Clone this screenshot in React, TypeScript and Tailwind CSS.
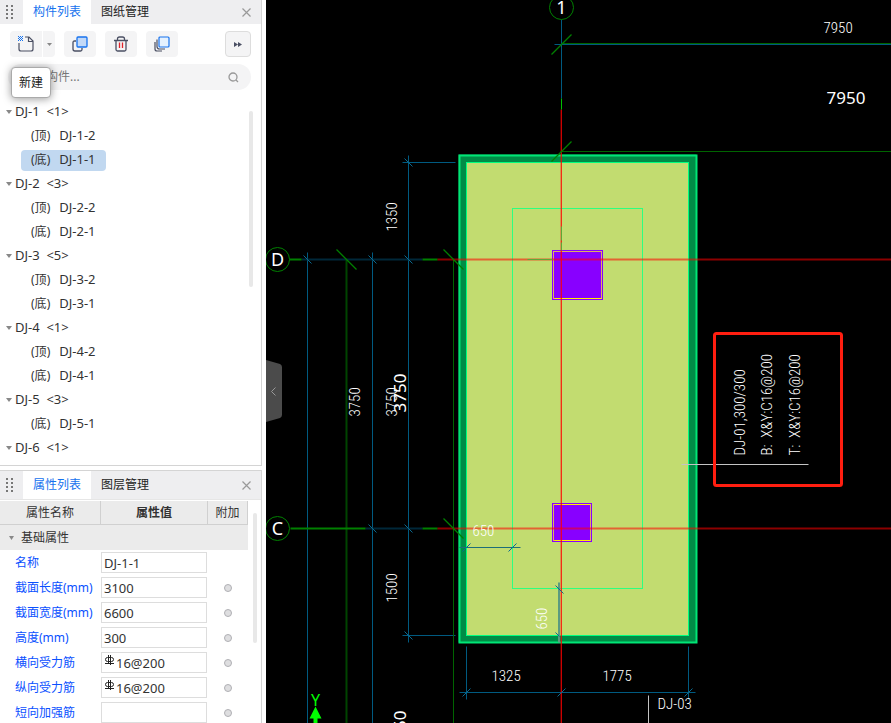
import { useState } from "react";
import clsx from "clsx";

const GROUPS = [
  { name: "DJ-1", count: 1, items: [["顶", "DJ-1-2"], ["底", "DJ-1-1"]] },
  { name: "DJ-2", count: 3, items: [["顶", "DJ-2-2"], ["底", "DJ-2-1"]] },
  { name: "DJ-3", count: 5, items: [["顶", "DJ-3-2"], ["底", "DJ-3-1"]] },
  { name: "DJ-4", count: 1, items: [["顶", "DJ-4-2"], ["底", "DJ-4-1"]] },
  { name: "DJ-5", count: 3, items: [["底", "DJ-5-1"]] },
  { name: "DJ-6", count: 1, items: [] },
];

const PROPERTIES = [
  { id: "name", label: "名称", value: "DJ-1-1" },
  { id: "length", label: "截面长度(mm)", value: "3100", extra: true },
  { id: "width", label: "截面宽度(mm)", value: "6600", extra: true },
  { id: "height", label: "高度(mm)", value: "300", extra: true },
  { id: "bar-x", label: "横向受力筋", value: "16@200", extra: true, rebar: true },
  { id: "bar-y", label: "纵向受力筋", value: "16@200", extra: true, rebar: true },
  { id: "bar-short", label: "短向加强筋", value: "", extra: true },
];

export default function App() {
  return (
    <div className="flex h-screen overflow-hidden bg-white font-['Noto_Sans','Noto_Sans_CJK_SC',sans-serif] text-xs text-[#333]">
      <aside className="mr-1 flex w-[262px] shrink-0 flex-col gap-1">
        <ComponentPanel />
        <PropertyPanel />
      </aside>
      <main className="relative min-w-0 flex-1 bg-black">
        <Drawing />
        <button type="button" aria-label="收起" className="absolute top-[360px] left-0">
          <svg width="16" height="62" viewBox="0 0 16 62" fill="none">
            <path d="M0 0L14 4Q16 5 16 7V55Q16 57 14 58L0 62Z" fill="#4b4b4b" />
            <path d="M9.500 27.500L5.500 31.500L9.500 35.500" stroke="#999" />
          </svg>
        </button>
      </main>
    </div>
  );
}

function PanelTabs({ tabs, className }: { tabs: string[]; className: string }) {
  const [active, setActive] = useState(0);

  return (
    <div className={clsx("flex shrink-0 items-stretch bg-[#eeeef0]", className)}>
      <div className="flex w-[23px] items-center pl-1.5">
        <svg width="7" height="14" fill="#777">
          {[0, 4, 8, 12].map((y) => (
            <g key={y}>
              <rect y={y} width="2" height="2" />
              <rect x="5" y={y} width="2" height="2" />
            </g>
          ))}
        </svg>
      </div>
      {tabs.map((tab, i) => (
        <button
          key={tab}
          type="button"
          onClick={() => setActive(i)}
          className={clsx("px-2.5 leading-5", i === active ? "bg-white text-[#1672ee]" : "text-[#222]")}
        >
          {tab}
        </button>
      ))}
      <button type="button" aria-label="关闭" className="mr-2.5 ml-auto">
        <svg width="9" height="9" stroke="#999" strokeWidth="1.200">
          <path d="M.5 .5L8.500 8.500M8.500 .5L.5 8.500" />
        </svg>
      </button>
    </div>
  );
}

function ComponentPanel() {
  const [selected, setSelected] = useState("DJ-1-1");

  return (
    <section className="flex min-h-0 flex-1 flex-col border-r border-b border-[#d4d4d4]">
      <PanelTabs tabs={["构件列表", "图纸管理"]} className="h-6" />

      <div className="mt-[7px] flex h-[26px] shrink-0 gap-[9px] px-2.5">
        <div className="relative flex gap-px">
          <button type="button" aria-label="新建" className="grid w-8 place-items-center rounded-l-sm bg-[#f4f4f5]">
            <NewIcon />
          </button>
          <button type="button" aria-label="更多新建" className="grid w-3 place-items-center rounded-r-sm bg-[#f4f4f5]">
            <svg width="5" height="3" fill="#888">
              <path d="M0 0H5L2.500 3Z" />
            </svg>
          </button>
          <div
            role="tooltip"
            className="absolute top-9 left-px z-10 flex h-[31px] w-10 items-center justify-center rounded-sm border border-[#aaa] bg-white text-[#222] shadow-[0_1px_9px_rgba(0,0,0,0.4)]"
          >
            新建
          </div>
        </div>
        <button type="button" aria-label="复制" className="grid w-8 place-items-center rounded-sm bg-[#f4f4f5]">
          <CopyIcon />
        </button>
        <button type="button" aria-label="删除" className="grid w-8 place-items-center rounded-sm bg-[#f4f4f5]">
          <TrashIcon />
        </button>
        <button type="button" aria-label="层间复制" className="grid w-8 place-items-center rounded-sm bg-[#f4f4f5]">
          <LayersIcon />
        </button>
        <button
          type="button"
          aria-label="展开"
          className="ml-auto grid w-[26px] place-items-center rounded-sm border border-[#ddd] bg-[#f4f4f5]"
        >
          <svg width="8" height="5" fill="#4a4f63">
            <path d="M0 0L4 2.500L0 5ZM4 0L8 2.500L4 5Z" />
          </svg>
        </button>
      </div>

      <label className="mr-2.5 ml-2 mt-[7px] flex h-[26px] shrink-0 items-center rounded-full bg-[#f4f4f5] pr-3 pl-[14px]">
        <input
          type="text"
          aria-label="搜索构件"
          placeholder="搜索构件..."
          className="min-w-0 flex-1 bg-transparent outline-none placeholder:text-[#777]"
        />
        <svg width="11" height="11" fill="none" stroke="#999" strokeWidth="1.300">
          <circle cx="5" cy="5" r="4" />
          <path d="M8 8L10 10" />
        </svg>
      </label>

      <div className="mt-2.5 flex min-h-0 flex-1 overflow-hidden pr-2">
        <ul className="flex-1">
          {GROUPS.map((group) => (
            <li key={group.name}>
              <div className="flex h-6 items-center gap-[3px] pl-1.5">
                <svg width="6" height="4" fill="#888">
                  <path d="M0 0H6L3 4Z" />
                </svg>
                <span className="text-[13px] whitespace-pre">{`${group.name}  <${group.count}>`}</span>
              </div>
              <ul>
                {group.items.map(([layer, name]) => (
                  <li key={name} className="flex h-6 items-center pl-[21px]">
                    <button
                      type="button"
                      onClick={() => setSelected(name)}
                      className={clsx("flex h-[21px] items-center gap-[9px] rounded-sm px-2.5", name === selected && "bg-[#c1d8f0]")}
                    >
                      <span>({layer})</span>
                      <span className="text-[13px]">{name}</span>
                    </button>
                  </li>
                ))}
              </ul>
            </li>
          ))}
        </ul>
        <div className="mt-[11px] h-44 w-1 rounded-full bg-[#e8e8e8]" />
      </div>
    </section>
  );
}

function PropertyPanel() {
  return (
    <section className="flex h-[253px] shrink-0 flex-col border-t border-r border-[#d4d4d4]">
      <PanelTabs tabs={["属性列表", "图层管理"]} className="h-[29px] border-b border-[#e6e6e6]" />
      <div className="mt-px flex min-h-0 flex-1 items-start overflow-hidden">
        <table className="w-[248px] table-fixed border-separate border-spacing-0">
          <colgroup>
            <col className="w-[101px]" />
            <col className="w-[107px]" />
            <col className="w-[40px]" />
          </colgroup>
          <thead>
            <tr className="h-6 bg-[#ebebeb]">
              <th className="border-r border-b border-[#d0d0d0] font-normal">属性名称</th>
              <th className="border-r border-b border-[#d0d0d0] font-bold">属性值</th>
              <th className="border-r border-b border-[#d0d0d0] font-normal">附加</th>
            </tr>
          </thead>
          <tbody>
            <tr className="h-[25px] bg-[#ebebeb]">
              <th colSpan={3} className="pl-[9px] text-left font-normal">
                <span className="flex items-center gap-[7px]">
                  <svg width="5" height="4" fill="#888">
                    <path d="M0 0H5L2.500 4Z" />
                  </svg>
                  基础属性
                </span>
              </th>
            </tr>
            {PROPERTIES.map((prop) => (
              <tr key={prop.id} className="h-[25px]">
                <td className="pl-[15px] whitespace-nowrap text-[#0a50ff]">
                  <label htmlFor={prop.id}>{prop.label}</label>
                </td>
                <td>
                  <div className="flex h-[21px] w-[106px] items-center gap-px border border-[#ddd] pl-0.5">
                    {prop.rebar && <RebarIcon />}
                    <input
                      id={prop.id}
                      defaultValue={prop.value}
                      className="w-full min-w-0 bg-transparent text-[13px] leading-4 outline-none"
                    />
                  </div>
                </td>
                <td>
                  {prop.extra && (
                    <input
                      type="checkbox"
                      aria-label={`附加${prop.label}`}
                      className="mx-auto block size-2 appearance-none rounded-full border border-[#b0b0b4] bg-[#dedee0] checked:bg-[#1672ee]"
                    />
                  )}
                </td>
              </tr>
            ))}
          </tbody>
        </table>
        <div className="mt-3 ml-[5px] h-[130px] w-1 rounded-full bg-[#e8e8e8]" />
      </div>
    </section>
  );
}

function NewIcon() {
  return (
    <svg width="16" height="16" viewBox="0 0 16 16" fill="none" stroke="#4a4f63" strokeWidth="1.200">
      <path d="M1 7V13Q1 15 3 15H13Q15 15 15 13V5L11 1H7" />
      <path d="M10.500 1V5.500H15" />
      <path d="M0 .5H5M0 2.500H5M0 4.500H5" stroke="#1672ee" strokeWidth="1" strokeDasharray="1 1" />
      <path d="M1 1.500H5M1 3.500H5" stroke="#1672ee" strokeWidth="1" strokeDasharray="1 1" />
    </svg>
  );
}

function CopyIcon() {
  return (
    <svg width="16" height="16" viewBox="0 0 16 16" fill="none" strokeWidth="1.300">
      <path d="M4 5H2.500Q1 5 1 6.500V13Q1 15 3 15H8.500Q10 15 10 13.500V12" stroke="#4a4f63" />
      <rect x="5" y="1" width="10" height="10" rx="1" fill="#c3d9f7" stroke="#1672ee" />
    </svg>
  );
}

function TrashIcon() {
  return (
    <svg width="14" height="16" viewBox="0 0 14 16" fill="none" stroke="#4a4f63" strokeWidth="1.300">
      <path d="M0 4.500H14M3.500 4V3Q3.500 1 5.500 1H8.500Q10.500 1 10.500 3V4M2 5V13.500Q2 15 3.500 15H10.500Q12 15 12 13.500V5" />
      <path d="M5.500 6.500V12M8.500 6.500V12" stroke="#e0242b" />
    </svg>
  );
}

function LayersIcon() {
  return (
    <svg width="16" height="16" viewBox="0 0 16 16" fill="none" strokeWidth="1.200">
      <path d="M3 3.500V10.500Q3 13 5.500 13H11" stroke="#4a4f63" />
      <path d="M1 6V13Q1 15 3 15H8" stroke="#4a4f63" />
      <rect x="5" y="1" width="10" height="10" rx="1" fill="#e5f1fe" stroke="#1672ee" />
    </svg>
  );
}

function RebarIcon() {
  return (
    <svg width="10" height="11" viewBox="0 0 10 11" fill="none" stroke="#222" className="mb-1 ml-px shrink-0">
      <rect x=".5" y="2.500" width="8" height="4" rx="2" />
      <path d="M3.500 0V8M5.500 0V10M0 8.500H9" />
    </svg>
  );
}

// short slashes where dimension lines meet; d is 1 for "\" and -1 for "/"
const TICKS = [
  [307, 259, 1], [372, 259, 1], [408, 259, 1], [408, 162, 1],
  [372, 528, 1], [408, 528, 1], [408, 635, 1], [559, 589, 1],
  [466, 547, -1], [512, 547, -1], [466, 692, -1], [561, 692, -1], [688, 692, -1],
];

const AXIS_TICKS = [
  [561, 44, -1], [561, 151, -1], [346, 259, 1], [453, 259, 1], [453, 528, 1],
];

const VERTICAL_DIMS = [
  { x: 396, y: 231, text: "1350" },
  { x: 359, y: 416, text: "3750" },
  { x: 396, y: 416, text: "3750" },
  { x: 396, y: 602, text: "1500" },
  { x: 546, y: 629, text: "650" },
  { x: 744, y: 455, text: "DJ-01,300/300" },
  { x: 771, y: 455, text: "B:  X&Y:C16@200" },
  { x: 799, y: 455, text: "T:  X&Y:C16@200" },
];

const FAR = 4000;

function Drawing() {
  return (
    <svg className="absolute inset-0 size-full" fill="none">
      {/* model coordinates, on pixel centres so that hairlines stay sharp */}
      <g transform="translate(-265.500 .5)">
        <g stroke="#005a80">
          <path d={`M561 19V98M554 44H${FAR}M402 162H455M402 635H455M408 155V642`} />
          <path d={`M307 252V${FAR}M372 252V${FAR}M459 692H695M466 646V699M688 646V699`} />
        </g>
        <path d="M301 259H422M365 528H422" stroke="#00283a" strokeWidth="2" />
        <path d={`M346 259V${FAR}`} stroke="#004400" strokeWidth="2" />
        <path d={`M453 259V${FAR}M561 151H${FAR}M561 43H${FAR}`} stroke="#006400" />
        <path d="M266 259H301M290 528H365M422 259H437M422 528H437" stroke="#008000" strokeWidth="2" />

        <rect x="458" y="154" width="238" height="488" fill="#008c46" />
        <rect x="459" y="155" width="237" height="487" stroke="#00e676" strokeWidth="2" />
        <rect x="466" y="162" width="222" height="473" fill="#c2dc70" stroke="#00ff7f" />
        <rect x="512" y="208" width="130" height="380" stroke="#2dff80" />

        <path d="M459 547H520" stroke="#1e6e78" />
        <path d="M558.500 582V642" stroke="#5a9a80" strokeWidth="2" />

        <rect x="552" y="250" width="50" height="49" fill="#8800ff" stroke="#8800ff" />
        <rect x="553" y="251" width="48" height="47" stroke="#dcb060" />
        <rect x="552" y="503" width="39" height="38" fill="#8800ff" stroke="#8800ff" />
        <rect x="553" y="504" width="37" height="36" stroke="#dcb060" />
        <path d="M554 298H601M554 504H590M554 540H590" stroke="#fff000" />

        <path d={`M437 259H${FAR}M437 528H${FAR}`} stroke="#ff0000" strokeOpacity=".55" strokeWidth="2" />
        <path d={`M560 109V${FAR}`} stroke="#ff0000" strokeOpacity=".3" />
        <path d={`M561 109V${FAR}`} stroke="#ff0000" strokeOpacity=".8" />
        <path d="M527 259H552M561 226V240M561 242V250" stroke="#5ca838" />
        <path d="M561 98V109" stroke="#00c000" />

        <g stroke="#0a6a90">
          {TICKS.map(([x, y, d]) => (
            <path key={`${x}-${y}`} d={`M${x - 4} ${y - 4 * d}L${x + 4} ${y + 4 * d}`} />
          ))}
          <path d="M555 632L559 636" />
        </g>
        <g stroke="#008000" strokeWidth="1.300">
          {AXIS_TICKS.map(([x, y, d]) => (
            <path key={`${x}-${y}`} d={`M${x - 10} ${y - 10 * d}L${x + 10} ${y + 10 * d}`} />
          ))}
        </g>

        <g stroke="#008000" fill="#000">
          <circle cx="561" cy="7" r="12" />
          <circle cx="277" cy="259" r="12" />
          <circle cx="277" cy="528" r="12" />
        </g>
        <g fill="#fff" className="text-lg" textAnchor="middle">
          <text x="561" y="13">1</text>
          <text x="277" y="265">D</text>
          <text x="277" y="534">C</text>
        </g>

        <path d="M681 464H808M648 695V723" stroke="#c4c4c4" />
        <rect x="714" y="333" width="127" height="152" rx="2" stroke="#ff1e10" strokeWidth="3" />

        <g fill="#fff" className="font-['Roboto_Condensed','DejaVu_Sans_Condensed',sans-serif] text-[15px] font-light">
          <text x="823" y="32">7950</text>
          <text x="491" y="680">1325</text>
          <text x="602" y="680">1775</text>
          <text x="472" y="535">650</text>
          <text x="657" y="708">DJ-03</text>
          {VERTICAL_DIMS.map((dim) => (
            <text key={`${dim.x}-${dim.y}`} transform={`translate(${dim.x} ${dim.y}) rotate(-90)`} className="whitespace-pre">
              {dim.text}
            </text>
          ))}
        </g>
        <g fill="#fff" className="text-[17px]">
          <text x="826" y="103">7950</text>
          <text transform="translate(405 412) rotate(-90)">3750</text>
          <text transform="translate(405 749) rotate(-90)">3750</text>
        </g>

        <g fill="#00ff00">
          <text x="315" y="705" textAnchor="middle" className="text-base">Y</text>
          <path d="M315 706L321 718H317V723H313V718H309Z" />
        </g>
      </g>
    </svg>
  );
}
